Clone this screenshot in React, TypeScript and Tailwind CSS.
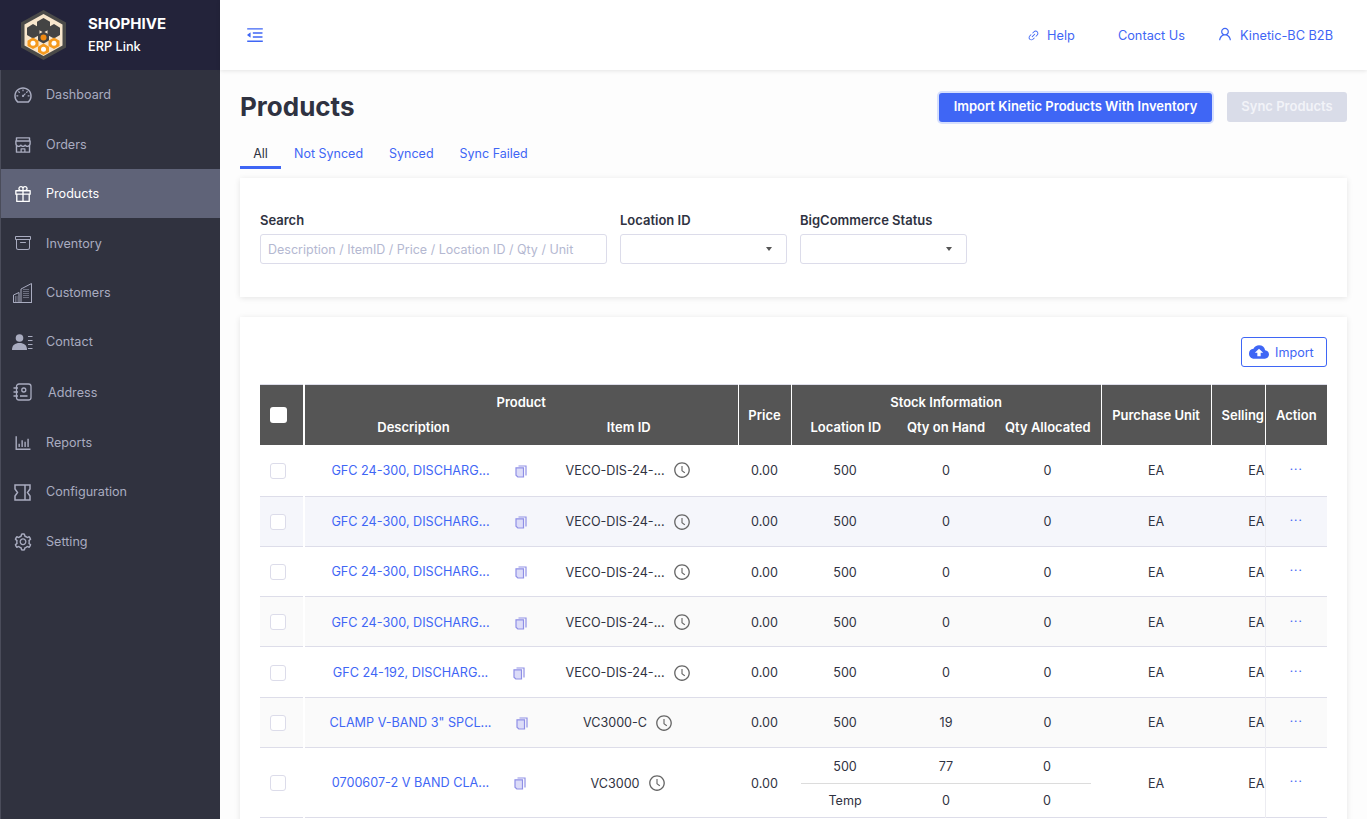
import React from "react";
import {
  AiOutlineDashboard,
  AiOutlineShop,
  AiOutlineGift,
  AiOutlineBarChart,
  AiOutlineSetting,
  AiOutlineMenuFold,
  AiOutlineClockCircle,
  AiOutlineUser,
  AiOutlineLink,
} from "react-icons/ai";
import { BsArchive } from "react-icons/bs";
import { MdCloudUpload } from "react-icons/md";

const Logo = () => (
  <svg width="48" height="52" viewBox="0 0 48 52">
    <path d="M23.5 1 L46 13.5 V38.5 L23.5 51 L1 38.5 V13.5 Z" fill="#4a4a48" />
    <path d="M23.5 5 L42.5 15.5 V36.5 L23.5 47 L4.5 36.5 V15.5 Z" fill="#f8e6cc" />
    <path d="M23.5 9 L30 12.7 V20 L23.5 23.5 L17 20 V12.7 Z" fill="#444" />
    <path d="M13 15 L19.5 18.7 V26 L13 29.5 L7 26 V18.7 Z" fill="#444" />
    <path d="M34 15 L40 18.7 V26 L34 29.5 L27.5 26 V18.7 Z" fill="#444" />
    <path d="M23.5 22.5 L29 25.5 V31.5 L23.5 34.5 L18 31.5 V25.5 Z" fill="#444" />
    <circle cx="23.5" cy="28.5" r="3" fill="#f08a12" />
    <path d="M13 28.5 L18.5 31.7 V37 L13 40 L7.5 37 V31.7 Z" fill="#f59a1e" />
    <circle cx="13" cy="34.3" r="2.5" fill="#fff" />
    <path d="M34 28.5 L39.5 31.7 V37 L34 40 L28.5 37 V31.7 Z" fill="#f59a1e" />
    <circle cx="34" cy="34.3" r="2.5" fill="#fff" />
    <path d="M23.5 34.5 L29 37.7 V43 L23.5 46 L18 43 V37.7 Z" fill="#f59a1e" />
    <circle cx="23.5" cy="40.3" r="2.5" fill="#fff" />
  </svg>
);

const BuildingIcon = () => (
  <svg width="20" height="20" viewBox="0 0 20 20" fill="none" stroke="currentColor" strokeWidth="1">
    <path d="M0.5 19.5 V12 L6 9.5 V19.5 Z" />
    <path d="M8 19.5 V6 L18.5 0.5 V19.5 Z" />
    <path d="M0.5 19.5 H19" />
    <path d="M10.5 8.5 h5 M10.5 10.5 h5 M10.5 12.5 h5 M10.5 14.5 h5 M10.5 6.5 h5" strokeDasharray="1 1" />
    <path d="M2 14 h2.5 M2 16 h2.5 M2 18 h2.5" strokeDasharray="1 0.5" />
  </svg>
);

const ContactIcon = () => (
  <svg width="21" height="16" viewBox="0 0 21 16" fill="currentColor">
    <circle cx="7.5" cy="4" r="3.8" />
    <path d="M0 16 C0 11 3 9 7.5 9 C12 9 15 11 15 16 Z" />
    <path d="M16 2 h4.5 v1 h-4.5 Z M16 6 h4.5 v1 h-4.5 Z M16 10 h4.5 v1 h-4.5 Z M16 14 h4.5 v1 h-4.5 Z" />
  </svg>
);

const AddressIcon = () => (
  <svg width="19" height="18" viewBox="0 0 19 18" fill="none" stroke="currentColor" strokeWidth="1.3">
    <rect x="3.5" y="1" width="14.5" height="16" rx="2.5" />
    <path d="M0.5 5 H5 M0.5 9 H5 M0.5 13 H5" />
    <circle cx="10.8" cy="7" r="2" />
    <path d="M7 13 H14.5" strokeWidth="1.6" />
  </svg>
);

const TicketIcon = () => (
  <svg width="17" height="17" viewBox="0 0 17 17" fill="none" stroke="currentColor" strokeWidth="1.5">
    <path d="M1 1 H16 V5 L13.5 8.5 L16 12 V16 H1 V12 L3.5 8.5 L1 5 Z" />
    <path d="M11 1 V16" />
  </svg>
);

const CopyIcon = () => (
  <svg width="12" height="13" viewBox="0 0 12 13" fill="none" stroke="#8f8fe6" strokeWidth="1.2">
    <path d="M3.5 1 H11 V10.5" />
    <path d="M1 2.8 H8.5 V12 H2.8 L1 10.2 Z" fill="#dcdcf8" />
  </svg>
);

const navItems = [
  { label: "Dashboard", icon: <AiOutlineDashboard size={20} />, h: "h-[50px]", text: "" },
  { label: "Orders", icon: <AiOutlineShop size={20} />, h: "h-[49px]", text: "pt-[2px]" },
  { label: "Products", icon: <AiOutlineGift size={20} />, h: "h-[49px]", text: "pt-[2px]", active: true },
  { label: "Inventory", icon: <BsArchive size={16} />, h: "h-[50px]", text: "pt-[2px]" },
  { label: "Customers", icon: <BuildingIcon />, h: "h-[49px]", text: "pt-[2px]" },
  { label: "Contact", icon: <ContactIcon />, h: "h-[49px]", text: "pt-[2px]" },
  { label: "Address", icon: <AddressIcon />, h: "h-[52px]", text: "ml-[2px] pt-[2px]" },
  { label: "Reports", icon: <AiOutlineBarChart size={20} />, h: "h-[49px]", text: "pt-[2px]" },
  { label: "Configuration", icon: <TicketIcon />, h: "h-[50px]", text: "" },
  { label: "Setting", icon: <AiOutlineSetting size={20} />, h: "h-[49px]", text: "pt-[2px]" },
];

const rows = [
  { desc: "GFC 24-300, DISCHARG...", item: "VECO-DIS-24-...", qty: "0", bg: "bg-white", h: "h-[51.5px]" },
  { desc: "GFC 24-300, DISCHARG...", item: "VECO-DIS-24-...", qty: "0", bg: "bg-[#f5f6fb]", h: "h-[50.3px]" },
  { desc: "GFC 24-300, DISCHARG...", item: "VECO-DIS-24-...", qty: "0", bg: "bg-white", h: "h-[50.3px]" },
  { desc: "GFC 24-300, DISCHARG...", item: "VECO-DIS-24-...", qty: "0", bg: "bg-[#fafafa]", h: "h-[50.3px]" },
  { desc: "GFC 24-192, DISCHARG...", item: "VECO-DIS-24-...", qty: "0", bg: "bg-white", h: "h-[50.3px]" },
  { desc: 'CLAMP V-BAND 3" SPCL...', item: "VC3000-C", qty: "19", bg: "bg-[#fafafa]", h: "h-[50.3px]" },
];

const Row = ({ desc, item, bg, h, children }: { desc: string; item: string; bg: string; h: string; children: React.ReactNode }) => (
  <tr className={`${bg} ${h} border-b border-[#dddde9] [&>td]:pt-[3px]`}>
    <td className="border-r-2 border-white pl-[10px]">
      <div className="w-4 h-4 rounded-[3px] border border-[#dcdcea] bg-white -mt-[2px]" />
    </td>
    <td>
      <div className="flex justify-center items-center gap-[25px]">
        <span className="text-[12.65px] text-[#3f66f5]">{desc}</span>
        <CopyIcon />
      </div>
    </td>
    <td className="pr-[35px]">
      <div className="flex justify-center items-center gap-[8px]">
        <span>{item}</span>
        <AiOutlineClockCircle size={18} className="text-[#666] -mt-[2px]" />
      </div>
    </td>
    {children}
    <td className="border-l border-[#ececf1] text-center align-middle">
      <div className="text-[#3f66f5] text-[11px] font-medium leading-none tracking-[1px] -mt-[4px]">···</div>
    </td>
  </tr>
);

export default function App() {
  return (
    <div className="flex h-screen w-full overflow-hidden bg-[#fdfdfd] text-[12.6px] text-[#2f3241] font-['Inter','Liberation_Sans',sans-serif]">
      <aside className="w-[220px] shrink-0 bg-[#30323f] border-l border-[#4a4c5a]">
        <div className="h-[70px] bg-[#23233a] -ml-px flex items-center pl-[20px] text-white">
          <Logo />
          <div className="ml-[20px]">
            <div className="text-[15px] font-bold leading-[20px] mb-[3px]">SHOPHIVE</div>
            <div className="text-[12.75px] font-medium leading-[20px]">ERP Link</div>
          </div>
        </div>
        <nav>
          {navItems.map((n) => (
            <div
              key={n.label}
              className={`${n.h} flex items-center ${n.active ? "bg-[#5f6378] text-white" : "text-[#a9acc0]"}`}
            >
              <span className="w-[45px] flex justify-center pr-[2px]">{n.icon}</span>
              <span className={n.text}>{n.label}</span>
            </div>
          ))}
        </nav>
      </aside>

      <div className="flex-1 min-w-0 flex flex-col">
        <header className="h-[70px] shrink-0 bg-white shadow-[0_1px_4px_rgba(0,0,0,0.1)] flex items-center justify-between pl-[25px] pr-[34px] text-[12.75px] text-[#3f66f5]">
          <AiOutlineMenuFold size={20} />
          <div className="flex items-center">
            <AiOutlineLink size={13} className="mr-[7px]" />
            <span className="pt-[2px]">Help</span>
            <span className="ml-[43px] pt-[2px]">Contact Us</span>
            <AiOutlineUser size={16} className="ml-[32px] mr-[7px] -mt-[2px]" />
            <span className="pt-[2px]">Kinetic-BC B2B</span>
          </div>
        </header>

        <main className="flex-1 px-[20px] pt-[22px]">
          <div className="flex items-center justify-between h-[30px]">
            <h1 className="text-[26px] font-bold leading-[30px] text-[#2f3241]">Products</h1>
            <div className="flex items-center gap-[15px]">
              <button className="h-[29px] w-[273px] rounded-[3px] bg-[#3f66f5] text-[13px] text-white font-semibold ring-2 ring-[#d6dffd]">
                Import Kinetic Products With Inventory
              </button>
              <button className="h-[30px] w-[120px] rounded-[3px] bg-[#d9dce8] text-[13px] text-[#f2f3f8] font-semibold">
                Sync Products
              </button>
            </div>
          </div>

          <div className="flex mt-[22px] h-[25px] text-[12.5px] pt-[1px]">
            <div className="w-[41px] text-center border-b-[3px] border-[#3f66f5] leading-[18px]">All</div>
            <div className="ml-[13px] text-[#3f66f5] leading-[18px]">Not Synced</div>
            <div className="ml-[26px] text-[#3f66f5] leading-[18px]">Synced</div>
            <div className="ml-[26px] text-[#3f66f5] leading-[18px]">Sync Failed</div>
          </div>

          <section className="mt-[9px] h-[119px] bg-white shadow-[0_1px_6px_rgba(0,0,0,0.1)] px-[20px] pt-[34px] flex">
            <div>
              <div className="text-[13px] font-semibold leading-[16px] mb-[6px]">Search</div>
              <div className="w-[347px] h-[30px] border border-[#dcdcea] rounded-[3px] px-[7px] pt-[2px] flex items-center text-[12.5px] text-[#b4b8d1]">
                Description / ItemID / Price / Location ID / Qty / Unit
              </div>
            </div>
            <div className="ml-[13px]">
              <div className="text-[13px] font-semibold leading-[16px] mb-[6px]">Location ID</div>
              <div className="w-[167px] h-[30px] border border-[#dcdcea] rounded-[3px] flex items-center justify-end pr-[14px]">
                <div className="border-x-[3.5px] border-x-transparent border-t-[4px] border-t-[#555]" />
              </div>
            </div>
            <div className="ml-[13px]">
              <div className="text-[13px] font-semibold leading-[16px] mb-[6px]">BigCommerce Status</div>
              <div className="w-[167px] h-[30px] border border-[#dcdcea] rounded-[3px] flex items-center justify-end pr-[14px]">
                <div className="border-x-[3.5px] border-x-transparent border-t-[4px] border-t-[#555]" />
              </div>
            </div>
          </section>

          <section className="mt-[20px] bg-white shadow-[0_1px_6px_rgba(0,0,0,0.1)] px-[20px] pt-[20px] pb-[20px]">
            <div className="flex justify-end">
              <button className="w-[86px] h-[30px] rounded-[3px] border border-[#3f66f5] text-[#3f66f5] flex items-center pl-[7px] gap-[6px]">
                <MdCloudUpload size={20} />
                <span className="pt-[2px]">Import</span>
              </button>
            </div>
            <table className="mt-[17px] w-[1067px] table-fixed border-collapse border-t border-[#dddde9] text-center">
              <colgroup>
                <col className="w-[44px]" />
                <col className="w-[249px]" />
                <col className="w-[185px]" />
                <col className="w-[53px]" />
                <col className="w-[104px]" />
                <col className="w-[101px]" />
                <col className="w-[105px]" />
                <col className="w-[110px]" />
                <col className="w-[54px]" />
                <col className="w-[62px]" />
              </colgroup>
              <thead className="bg-[#555555] text-[13px] text-white">
                <tr className="h-[33px]">
                  <th rowSpan={2} className="border-r-2 border-white text-left pl-[10px] font-semibold">
                    <div className="w-[17px] h-[16px] rounded-[3px] bg-white" />
                  </th>
                  <th colSpan={2} className="border-r border-white font-semibold pt-[3px]">Product</th>
                  <th rowSpan={2} className="border-r border-white font-semibold pt-[2px]">Price</th>
                  <th colSpan={3} className="border-r border-white font-semibold pt-[3px]">Stock Information</th>
                  <th rowSpan={2} className="border-r border-white font-semibold pt-[2px]">Purchase Unit</th>
                  <th rowSpan={2} className="border-r border-white font-semibold text-left pl-[10px] pt-[2px]">Selling</th>
                  <th rowSpan={2} className="font-semibold pt-[2px]">Action</th>
                </tr>
                <tr className="h-[27px]">
                  <th className="pr-[31px] font-semibold pb-[6px]">Description</th>
                  <th className="pr-[33px] font-semibold border-r border-white pb-[6px]">Item ID</th>
                  <th className="pl-[5px] font-semibold pb-[6px]">Location ID</th>
                  <th className="pl-[1px] font-semibold pb-[6px]">Qty on Hand</th>
                  <th className="pr-[1px] font-semibold border-r border-white pb-[6px]">Qty Allocated</th>
                </tr>
              </thead>
              <tbody className="text-[#2f3241]">
                {rows.map((r, i) => (
                  <Row key={i} desc={r.desc} item={r.item} bg={r.bg} h={r.h}>
                    <td>0.00</td>
                    <td className="pl-[4px]">500</td>
                    <td className="pl-[1px]">{r.qty}</td>
                    <td className="pr-[2px]">0</td>
                    <td>EA</td>
                    <td className="text-right">EA</td>
                  </Row>
                ))}
                <Row desc="0700607-2 V BAND CLA..." item="VC3000" bg="bg-white" h="h-[70px]">
                  <td>0.00</td>
                  <td colSpan={3} className="px-[10px]">
                    <div className="grid grid-cols-[88px_114px_88px] h-[33px] w-[290px] items-center border-b border-[#dcdcdc]">
                      <span>500</span>
                      <span>77</span>
                      <span>0</span>
                    </div>
                    <div className="grid grid-cols-[88px_114px_88px] h-[33px] w-[290px] items-center pt-[1px]">
                      <span>Temp</span>
                      <span>0</span>
                      <span>0</span>
                    </div>
                  </td>
                  <td>EA</td>
                  <td className="text-right">EA</td>
                </Row>
              </tbody>
            </table>
          </section>
        </main>
      </div>
    </div>
  );
}
